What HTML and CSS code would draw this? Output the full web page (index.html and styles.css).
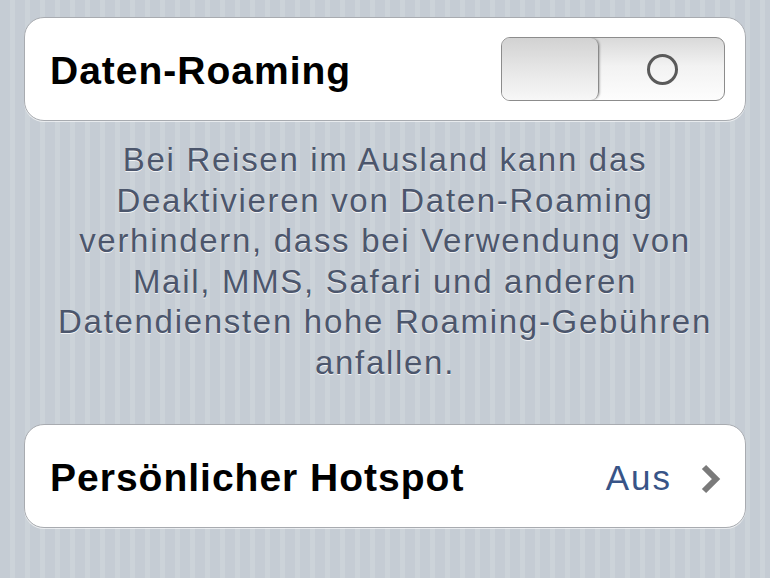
FILE: index.html
```html
<!DOCTYPE html>
<html lang="de">
<head>
    <meta charset="UTF-8">
    <title>Mobiles Netz</title>
    <link rel="stylesheet" href="styles.css">
</head>
<body>
<div class="page">
    <div class="group">
        <div class="row">
            <span class="label">Daten-Roaming</span>
            <div class="switch">
                <div class="thumb"></div>
                <div class="off"><span class="ring"></span></div>
            </div>
        </div>
    </div>
    <p class="footer">Bei Reisen im Ausland kann das<br>Deaktivieren von Daten-Roaming<br>verhindern, dass bei Verwendung von<br>Mail, MMS, Safari und anderen<br>Datendiensten hohe Roaming-Gebühren<br>anfallen.</p>
    <div class="group">
        <div class="row">
            <span class="label">Persönlicher Hotspot</span>
            <span class="value">Aus
                <svg class="chevron" width="22" height="32" viewBox="0 0 22 32">
                    <polyline points="4,4 16,16 4,28" fill="none" stroke="#7a7a7a" stroke-width="6"/>
                </svg>
            </span>
        </div>
    </div>
</div>
</body>
</html>
```

FILE: styles.css
```css
*{
    margin: 0;
    padding: 0;
    box-sizing: border-box;
}
body{
    background: repeating-linear-gradient(90deg, #c5ccd4 0, #c5ccd4 10px, #ccd3d9 10px, #ccd3d9 15px);
    font-family: "Liberation Sans", Arial, sans-serif;
    height: 578px;
    overflow: hidden;
}
.page{
    padding: 17px 24px 0 24px;
}
.group{
    background: #fff;
    border: 1px solid #a8abb0;
    border-radius: 20px;
    height: 104px;
    box-shadow: 0 1px 0 rgba(255, 255, 255, 0.6);
}
.row{
    height: 100%;
    display: flex;
    align-items: center;
    justify-content: space-between;
    padding: 3px 20px 0 25px;
}
.label{
    font-size: 39px;
    font-weight: bold;
    letter-spacing: 1px;
    color: #000;
}
.switch{
    width: 224px;
    height: 64px;
    margin-top: -3px;
    border: 1px solid #8c8c8c;
    border-radius: 9px;
    display: flex;
    overflow: hidden;
    background: linear-gradient(#d9d9d9, #f2f2f2 45%, #fdfdfd);
}
.thumb{
    width: 97px;
    border-right: 1px solid #8a8a8a;
    border-radius: 0 8px 8px 0;
    background: linear-gradient(#d2d2d2, #e6e6e6 50%, #f7f7f7);
    box-shadow: 1px 0 2px rgba(0, 0, 0, 0.25);
}
.off{
    flex: 1;
    display: flex;
    align-items: center;
    justify-content: center;
    padding-left: 2px;
}
.ring{
    width: 31px;
    height: 31px;
    border: 3px solid #5a5a5a;
    border-radius: 50%;
}
.footer{
    margin: 19px -10px 41px -10px;
    text-align: center;
    font-size: 33px;
    letter-spacing: 1.7px;
    line-height: 40.5px;
    color: #4c566c;
    text-shadow: 0 1px 0 rgba(255, 255, 255, 0.8);
}
.value{
    display: flex;
    align-items: center;
    gap: 28px;
    font-size: 35px;
    letter-spacing: 2px;
    color: #385487;
}
.chevron{
    margin-top: 2px;
    margin-right: 3px;
}
```
